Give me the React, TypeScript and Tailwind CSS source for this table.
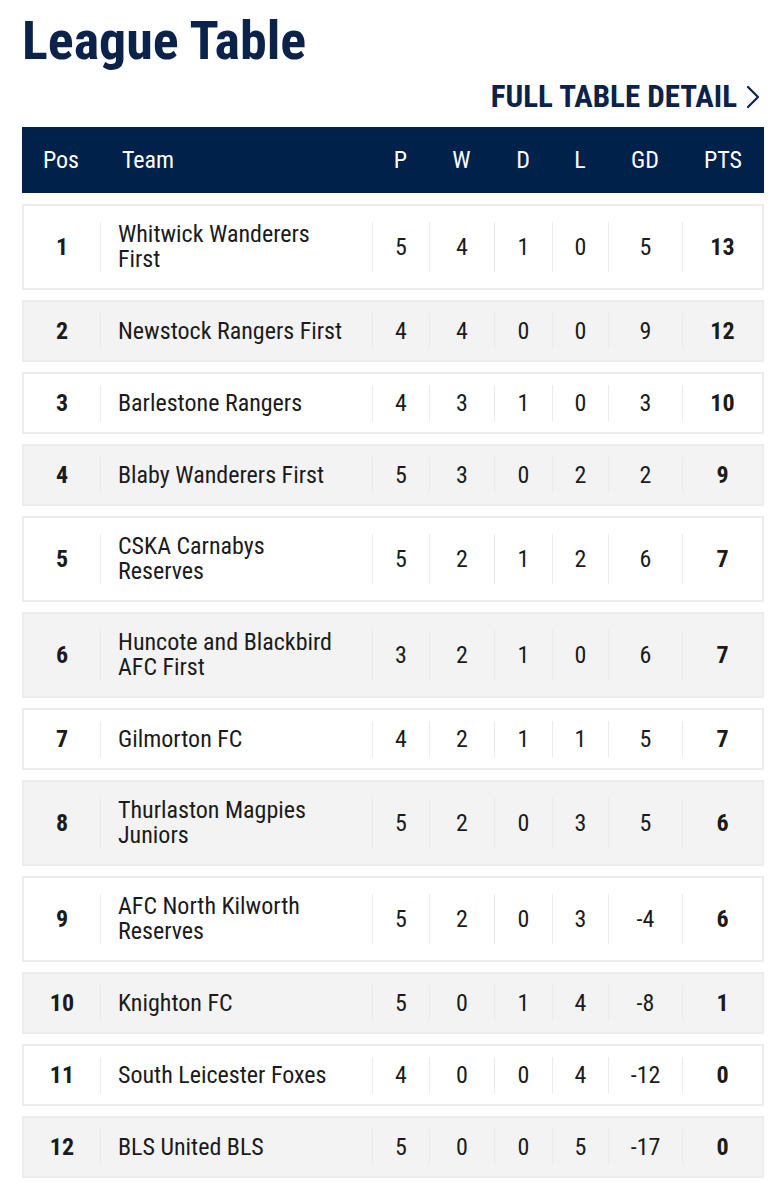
type Row = {
  pos: number;
  team: string[];
  p: number;
  w: number;
  d: number;
  l: number;
  gd: number;
  pts: number;
};

const ROWS: Row[] = [
  { pos: 1, team: ["Whitwick Wanderers", "First"], p: 5, w: 4, d: 1, l: 0, gd: 5, pts: 13 },
  { pos: 2, team: ["Newstock Rangers First"], p: 4, w: 4, d: 0, l: 0, gd: 9, pts: 12 },
  { pos: 3, team: ["Barlestone Rangers"], p: 4, w: 3, d: 1, l: 0, gd: 3, pts: 10 },
  { pos: 4, team: ["Blaby Wanderers First"], p: 5, w: 3, d: 0, l: 2, gd: 2, pts: 9 },
  { pos: 5, team: ["CSKA Carnabys", "Reserves"], p: 5, w: 2, d: 1, l: 2, gd: 6, pts: 7 },
  { pos: 6, team: ["Huncote and Blackbird", "AFC First"], p: 3, w: 2, d: 1, l: 0, gd: 6, pts: 7 },
  { pos: 7, team: ["Gilmorton FC"], p: 4, w: 2, d: 1, l: 1, gd: 5, pts: 7 },
  { pos: 8, team: ["Thurlaston Magpies", "Juniors"], p: 5, w: 2, d: 0, l: 3, gd: 5, pts: 6 },
  { pos: 9, team: ["AFC North Kilworth", "Reserves"], p: 5, w: 2, d: 0, l: 3, gd: -4, pts: 6 },
  { pos: 10, team: ["Knighton FC"], p: 5, w: 0, d: 1, l: 4, gd: -8, pts: 1 },
  { pos: 11, team: ["South Leicester Foxes"], p: 4, w: 0, d: 0, l: 4, gd: -12, pts: 0 },
  { pos: 12, team: ["BLS United BLS"], p: 5, w: 0, d: 0, l: 5, gd: -17, pts: 0 },
];

const HEADERS = ["P", "W", "D", "L", "GD"];

function Cell({ children, bold }: { children: React.ReactNode; bold?: boolean }) {
  return (
    <div
      className={`flex min-h-[36px] items-center justify-center border-l border-[#ebebeb] ${
        bold ? "font-bold" : ""
      }`}
    >
      {children}
    </div>
  );
}

export default function App() {
  return (
    <div className="min-h-[1200px] bg-white font-['Roboto_Condensed',Roboto,sans-serif] text-[#1b1b1b]">
      <div className="ml-[22px] w-[742px] pb-[22px]">
        <h1 className="pt-[14px] text-[54px] font-bold leading-none text-[#0c2349]">League Table</h1>

        <div className="mt-[13px] flex justify-end pr-[3px]">
          <a href="#" className="flex items-center gap-[8px] text-[31px] font-bold leading-none text-[#0c2349]">
            <span>FULL TABLE DETAIL</span>
            <svg width="16" height="26" viewBox="0 0 16 26" fill="none" aria-hidden="true">
              <polyline
                points="3,3 13,13 3,23"
                stroke="#0c2349"
                strokeWidth="2.2"
                strokeLinecap="round"
                strokeLinejoin="round"
              />
            </svg>
          </a>
        </div>

        <div className="mt-[15px] grid h-[66px] grid-cols-[78px_272px_57px_65px_58px_56px_74px_82px] items-center bg-[#00214a] text-[24px] text-white">
          <div className="text-center">Pos</div>
          <div className="pl-[22px]">Team</div>
          {HEADERS.map((h) => (
            <div key={h} className="text-center">
              {h}
            </div>
          ))}
          <div className="text-center">PTS</div>
        </div>

        <div className="mt-[11px] flex flex-col gap-[10px]">
          {ROWS.map((r) => {
            const twoLines = r.team.length > 1;
            return (
              <div
                key={r.pos}
                className={`grid grid-cols-[76px_272px_57px_65px_58px_56px_74px_80px] border-2 border-[#ededed] text-[24px] ${
                  r.pos % 2 === 0 ? "bg-[#f3f3f3]" : "bg-white"
                } ${twoLines ? "py-[16px]" : "py-[11px]"}`}
              >
                <div className="flex items-center justify-center font-bold">{r.pos}</div>
                <div className="flex min-h-[36px] items-center border-l border-[#ebebeb] pl-[17px]">
                  <div className="whitespace-nowrap leading-[25px]">
                    {r.team.map((t, i) => (
                      <div key={i}>{t}</div>
                    ))}
                  </div>
                </div>
                <Cell>{r.p}</Cell>
                <Cell>{r.w}</Cell>
                <Cell>{r.d}</Cell>
                <Cell>{r.l}</Cell>
                <Cell>{r.gd}</Cell>
                <Cell bold>{r.pts}</Cell>
              </div>
            );
          })}
        </div>
      </div>
    </div>
  );
}
